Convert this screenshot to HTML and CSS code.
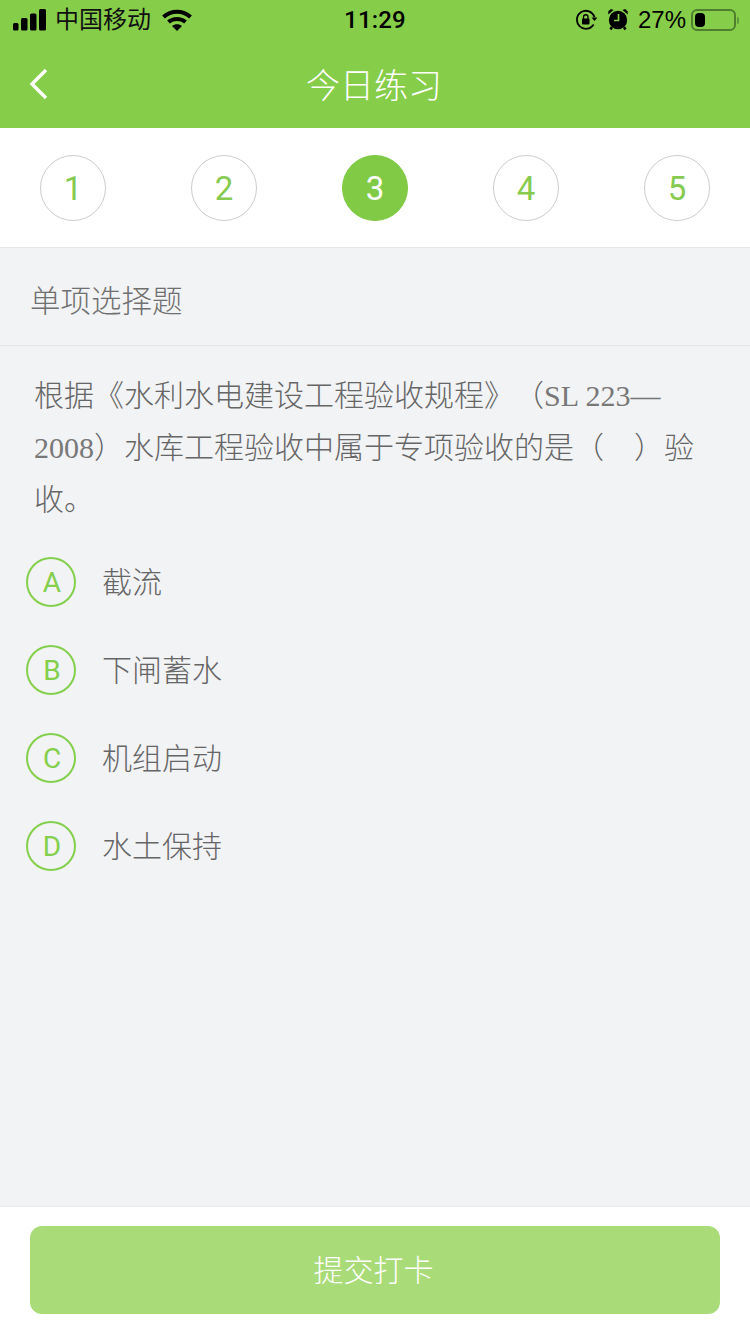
FILE: index.html
```html
<!DOCTYPE html>
<html lang="zh-CN">
<head>
<meta charset="utf-8">
<title>今日练习</title>
<link rel="stylesheet" href="styles.css">
</head>
<body>
<div class="page">
  <header class="header">
    <div class="status">
      <div class="status-left">
        <svg class="signal" width="34" height="22" viewBox="0 0 34 22"><rect x="0" y="14" width="5.500" height="7.500" rx="1.500"/><rect x="8" y="9" width="6.500" height="12.500" rx="1.500"/><rect x="17" y="4.500" width="6.500" height="17" rx="1.500"/><rect x="26" y="0" width="7" height="21.500" rx="1.500"/></svg>
        <span class="carrier">中国移动</span>
        <svg class="wifi" width="30" height="22" viewBox="0 0 30 22"><path d="M1.500 8C9 1 21 1 28.500 8" fill="none" stroke="#000" stroke-width="4"/><path d="M6.500 13C11 9 19 9 23.500 13" fill="none" stroke="#000" stroke-width="4"/><path d="M10 17C13 14.800 17 14.800 20 17L15 22Z"/></svg>
      </div>
      <div class="status-time">11:29</div>
      <div class="status-right">
        <svg class="lock" width="22" height="22" viewBox="0 0 22 22"><path d="M18.600 15.500A9 9 0 1 1 19.500 8" fill="none" stroke="#000" stroke-width="1.800"/><path d="M16.500 8.500h6l-3 3.500z"/><rect x="7" y="9.500" width="7.500" height="6" rx="1"/><path d="M8.500 10V8a2.200 2.200 0 0 1 4.500 0v2" fill="none" stroke="#000" stroke-width="1.300"/></svg>
        <svg class="alarm" width="20" height="22" viewBox="0 0 20 22"><circle cx="10" cy="11" r="9.200"/><path d="M.3 5.500 5.500 1 2.800 0 .2 2.500zM19.700 5.500 14.500 1 17.200 0 19.800 2.500z"/><path d="M4 18 2.500 20.500M16 18 17.500 20.500" stroke="#000" stroke-width="2.600"/><path d="M10.500 5v6.500H6" fill="none" stroke="#86cd4a" stroke-width="1.700"/></svg>
        <span class="percent">27%</span>
        <div class="battery"><div class="battery-level"></div></div>
        <div class="battery-nub"></div>
      </div>
    </div>
    <nav class="nav">
      <svg class="back" width="20" height="32" viewBox="0 0 20 32"><path d="M17 2 3 16l14 14" fill="none" stroke="#fff" stroke-width="3.400"/></svg>
      <h1 class="title">今日练习</h1>
    </nav>
  </header>

  <div class="steps">
    <div class="step">1</div>
    <div class="step">2</div>
    <div class="step step-active">3</div>
    <div class="step">4</div>
    <div class="step">5</div>
  </div>

  <main class="main">
    <div class="type">单项选择题</div>
    <div class="question">根据《水利水电建设工程验收规程》（<span class="latin">SL 223—</span><br><span class="latin">2008</span>）水库工程验收中属于专项验收的是（&emsp;）验<br>收。</div>
    <ul class="options">
      <li class="option"><span class="letter">A</span><span class="option-text">截流</span></li>
      <li class="option"><span class="letter">B</span><span class="option-text">下闸蓄水</span></li>
      <li class="option"><span class="letter">C</span><span class="option-text">机组启动</span></li>
      <li class="option"><span class="letter">D</span><span class="option-text">水土保持</span></li>
    </ul>
  </main>

  <footer class="footer">
    <button class="submit" type="button">提交打卡</button>
  </footer>
</div>
</body>
</html>
```

FILE: styles.css
```css
* {
  box-sizing: border-box;
}

html,
body {
  margin: 0;
  padding: 0;
}

body {
  font-family: "Noto Sans CJK SC", "Liberation Sans", sans-serif;
  font-weight: 300;
  text-spacing-trim: space-all;
  background: #f2f3f5;
}

.page {
  width: 750px;
  height: 1334px;
  display: flex;
  flex-direction: column;
  overflow: hidden;
}

.header {
  height: 128px;
  background: #86cd4a;
  flex: none;
}

.status {
  height: 40px;
  display: grid;
  grid-template-columns: 1fr auto 1fr;
  align-items: center;
  color: #000;
  font-size: 24px;
}

.status-left {
  display: flex;
  align-items: center;
  padding-left: 13px;
}

.signal {
  flex: none;
}

.carrier {
  margin-left: 8px;
  line-height: 36px;
  padding-bottom: 4px;
  font-weight: 400;
  color: #111;
}

.wifi {
  margin-left: 11px;
  flex: none;
}

.status-time {
  font-family: Roboto, "Liberation Sans", sans-serif;
  font-size: 24px;
  font-weight: 500;
  letter-spacing: 0.2px;
}

.status-right {
  display: flex;
  align-items: center;
  justify-content: flex-end;
  padding-right: 11px;
}

.lock {
  margin-right: 11px;
}

.alarm {
  margin-right: 10px;
}

.percent {
  font-family: "Liberation Sans", sans-serif;
  font-size: 24px;
  margin-right: 5px;
}

.battery {
  width: 45px;
  height: 22px;
  border: 2px solid #4f7f2e;
  border-radius: 6px;
  padding: 2px;
}

.battery-level {
  width: 10px;
  height: 100%;
  background: #000;
  border-radius: 4px;
}

.battery-nub {
  width: 2px;
  height: 7px;
  margin-left: 1px;
  background: #5f9a38;
  border-radius: 0 2px 2px 0;
}

.nav {
  height: 88px;
  position: relative;
  display: flex;
  align-items: center;
  justify-content: center;
}

.back {
  position: absolute;
  left: 29px;
  top: 28px;
}

.title {
  margin: 0 2px 0 0;
  font-size: 34px;
  font-weight: 300;
  line-height: 86px;
  color: #fff;
}

.steps {
  height: 120px;
  flex: none;
  background: #fff;
  border-bottom: 1px solid #e6e6e6;
  padding: 27px 40px 0;
  display: flex;
  justify-content: space-between;
  align-items: flex-start;
}

.step {
  width: 66px;
  height: 66px;
  border: 1px solid #cccccc;
  border-radius: 50%;
  display: flex;
  align-items: center;
  justify-content: center;
  font-family: Roboto, "Liberation Sans", sans-serif;
  font-weight: 400;
  font-size: 33px;
  color: #86cb50;
}

.step-active {
  background: #80ca45;
  border-color: #80ca45;
  color: #fff;
}

.main {
  flex: 1;
  background: #f2f3f5;
  min-height: 0;
}

.type {
  height: 98px;
  border-bottom: 1px solid #e6e7e9;
  padding-left: 30px;
  font-size: 30.500px;
  line-height: 102px;
  color: #707070;
}

.question {
  padding: 21px 30px 0 34px;
  font-size: 30px;
  line-height: 52px;
  color: #666;
}

.latin {
  font-family: "Liberation Serif", serif;
  font-weight: 400;
  line-height: 0;
  color: #787878;
}

.options {
  list-style: none;
  margin: 15px 0 0;
  padding: 0 0 0 26px;
}

.option {
  height: 88px;
  display: flex;
  align-items: center;
}

.letter {
  width: 50px;
  height: 50px;
  flex: none;
  border: 2px solid #84cf4c;
  border-radius: 50%;
  padding-left: 2px;
  display: flex;
  align-items: center;
  justify-content: center;
  font-family: Roboto, "Liberation Sans", sans-serif;
  font-weight: 400;
  font-size: 28px;
  color: #84cf4c;
}

.option-text {
  margin-left: 26px;
  padding-bottom: 5px;
  font-size: 30px;
  color: #666;
}

.footer {
  height: 128px;
  flex: none;
  background: #fff;
  border-top: 1px solid #e8e9ec;
  padding: 19px 30px 0;
}

.submit {
  display: block;
  width: 100%;
  height: 88px;
  border: 0;
  border-radius: 12px;
  background: #a9dc78;
  color: #fff;
  font-family: inherit;
  font-weight: 300;
  font-size: 30px;
  padding: 0 3px 4px 0;
}
```
